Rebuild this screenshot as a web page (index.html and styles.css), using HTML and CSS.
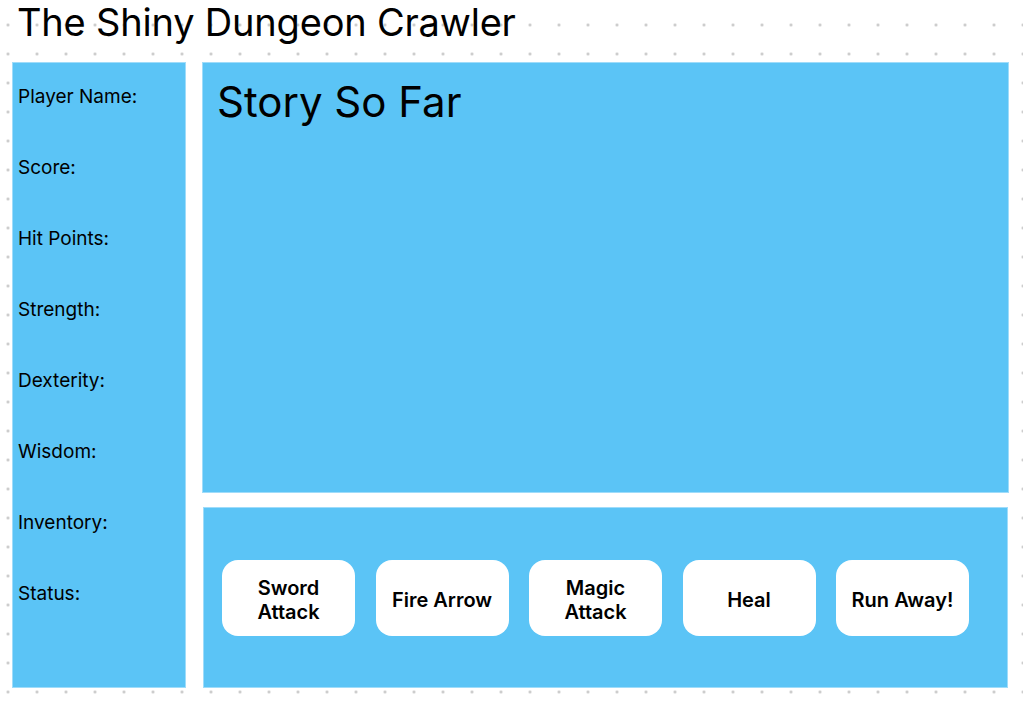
FILE: index.html
```html
<!DOCTYPE html>
<html lang="en">

<head>
    <meta charset="UTF-8">
    <meta name="viewport" content="width=device-width, initial-scale=1.0">
    <title>The Shiny Dungeon Crawler</title>
    <link rel="stylesheet" href="styles.css">
</head>

<body>
    <h1 class="title">The Shiny Dungeon Crawler</h1>

    <main class="board">
        <aside class="panel stats">
            <p class="stat">Player Name:</p>
            <p class="stat">Score:</p>
            <p class="stat">Hit Points:</p>
            <p class="stat">Strength:</p>
            <p class="stat">Dexterity:</p>
            <p class="stat">Wisdom:</p>
            <p class="stat">Inventory:</p>
            <p class="stat">Status:</p>
        </aside>

        <section class="panel story">
            <h2 class="story-title">Story So Far</h2>
        </section>

        <section class="panel actions">
            <button class="action">Sword<br>Attack</button>
            <button class="action">Fire Arrow</button>
            <button class="action">Magic<br>Attack</button>
            <button class="action">Heal</button>
            <button class="action">Run Away!</button>
        </section>
    </main>
</body>

</html>
```

FILE: styles.css
```css
body {
    margin: 0;
    height: 704px;
    font-family: Inter, "Noto Sans", sans-serif;
    color: #000;
    background-color: #fff;
    background-image: radial-gradient(circle, #c4c4c4 1.1px, transparent 1.6px);
    background-size: 29px 29px;
    background-position: -6.5px 10.5px;
}

.title {
    margin: 0;
    padding: 0 0 0 17px;
    height: 62px;
    font-size: 38px;
    font-weight: 400;
    letter-spacing: -0.2px;
    line-height: 44px;
}

.board {
    display: grid;
    grid-template-columns: 174px 807px;
    grid-template-rows: 431px 181px;
    column-gap: 16px;
    row-gap: 14px;
    padding-left: 12px;
}

.panel {
    box-sizing: border-box;
    background-color: #5bc4f6;
    border: 1px solid #9fdcfa;
}

.stats {
    grid-row: 1 / 3;
    display: flex;
    flex-direction: column;
    gap: 48px;
    padding: 22px 0 0 5px;
}

.stat {
    margin: 0;
    font-size: 19px;
    line-height: 23px;
}

.story {
    padding: 14px 14px;
}

.story-title {
    margin: 0;
    font-size: 42px;
    font-weight: 400;
    line-height: 50px;
}

.actions {
    margin: 0 1px;
    display: flex;
    align-items: center;
    gap: 20.5px;
    padding-left: 18px;
}

.action {
    width: 133px;
    height: 76px;
    padding: 4px 0 0;
    border: none;
    border-radius: 16px;
    background-color: #fff;
    color: #000;
    font-family: Inter, "Noto Sans", sans-serif;
    font-size: 20px;
    font-weight: 600;
    line-height: 24px;
}
```
